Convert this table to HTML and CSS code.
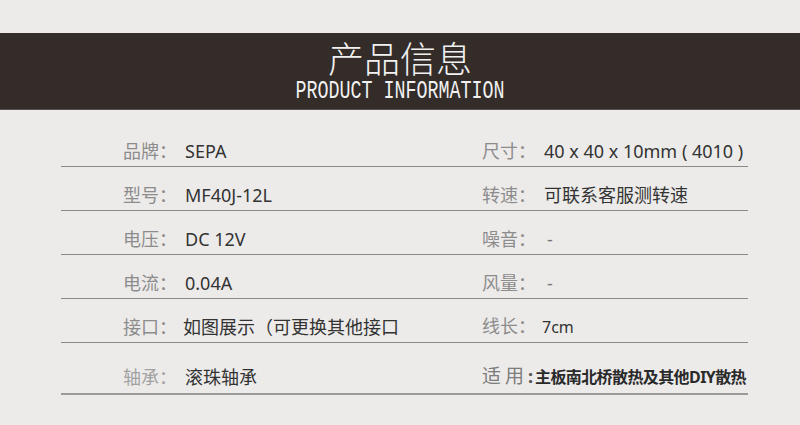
FILE: index.html
```html
<!DOCTYPE html>
<html lang="zh-CN">
<head>
<meta charset="utf-8">
<title>产品信息</title>
<link rel="stylesheet" href="styles.css">
</head>
<body>
<header class="band">
  <h1 class="title">产品信息</h1>
  <div class="subtitle">PRODUCT INFORMATION</div>
</header>
<section class="specs">
  <div class="row">
    <div class="cell cell-left"><span class="label">品牌：</span><span class="value">SEPA</span></div>
    <div class="cell"><span class="label">尺寸：</span><span class="value">40 x 40 x 10mm ( 4010 )</span></div>
  </div>
  <div class="row">
    <div class="cell cell-left"><span class="label">型号：</span><span class="value">MF40J-12L</span></div>
    <div class="cell"><span class="label">转速：</span><span class="value">可联系客服测转速</span></div>
  </div>
  <div class="row">
    <div class="cell cell-left"><span class="label">电压：</span><span class="value">DC 12V</span></div>
    <div class="cell"><span class="label">噪音：</span><span class="value dash">-</span></div>
  </div>
  <div class="row">
    <div class="cell cell-left"><span class="label">电流：</span><span class="value">0.04A</span></div>
    <div class="cell"><span class="label">风量：</span><span class="value dash">-</span></div>
  </div>
  <div class="row">
    <div class="cell cell-left"><span class="label">接口：</span><span class="value value-tight">如图展示（可更换其他接口</span></div>
    <div class="cell"><span class="label">线长：</span><span class="value value-small">7cm</span></div>
  </div>
  <div class="row row-last">
    <div class="cell cell-left"><span class="label label-light">轴承：</span><span class="value">滚珠轴承</span></div>
    <div class="cell"><span class="label-wide">适用</span><span class="colon">:</span><span class="value value-bold">主板南北桥散热及其他DIY散热</span></div>
  </div>
</section>
</body>
</html>
```
FILE: styles.css
```css
body {
  margin: 0;
  background: #ecebea;
  font-family: "Noto Sans", "Noto Sans CJK SC", sans-serif;
}

.band {
  margin-top: 33px;
  height: 77px;
  box-sizing: border-box;
  padding-top: 6px;
  background: #332c29;
  border-bottom: 1px solid #5b5350;
  text-align: center;
  color: #f1f1f1;
}

.title {
  margin: 0;
  font-family: "Noto Sans CJK SC", sans-serif;
  font-weight: 300;
  font-size: 36px;
  line-height: 36px;
}

.subtitle {
  margin-top: 7px;
  font-family: "Liberation Mono", monospace;
  font-size: 25px;
  line-height: 20px;
  transform: scaleX(0.733);
}

.specs {
  margin: 13px 0 0 61px;
  width: 687px;
}

.row {
  display: grid;
  grid-template-columns: 421px 1fr;
  align-items: end;
  height: 44px;
  box-sizing: border-box;
  border-bottom: 1px solid #8a8a8a;
}

.row-last {
  height: 52px;
  border-bottom: 2px solid #9a9a9a;
}

.cell {
  display: flex;
  align-items: baseline;
  line-height: 24px;
  padding-bottom: 3px;
  white-space: nowrap;
}

.row-last .cell {
  padding-bottom: 4px;
}

.cell-left {
  padding-left: 62px;
}

.label {
  flex: none;
  width: 62px;
  color: #8c8c8c;
  font-family: "Noto Sans CJK SC", sans-serif;
  font-size: 18px;
}

.label-light {
  color: #a2a2a2;
}

.value {
  color: #333;
  font-size: 18px;
}

.dash {
  padding-left: 3px;
  color: #777;
}

.value-tight {
  margin-left: -2px;
}

.value-small {
  font-size: 16px;
  margin-left: -2px;
}

.label-wide {
  flex: none;
  color: #7c7c7c;
  font-family: "Noto Sans CJK SC", sans-serif;
  font-size: 19px;
  letter-spacing: 4px;
}

.colon {
  flex: none;
  width: 7px;
  color: #555;
  font-weight: 700;
  font-size: 18px;
}

.value-bold {
  color: #2a2a2a;
  font-family: "Noto Sans", "Noto Sans CJK SC", sans-serif;
  font-weight: 700;
  font-size: 16px;
  letter-spacing: -0.6px;
}
```
